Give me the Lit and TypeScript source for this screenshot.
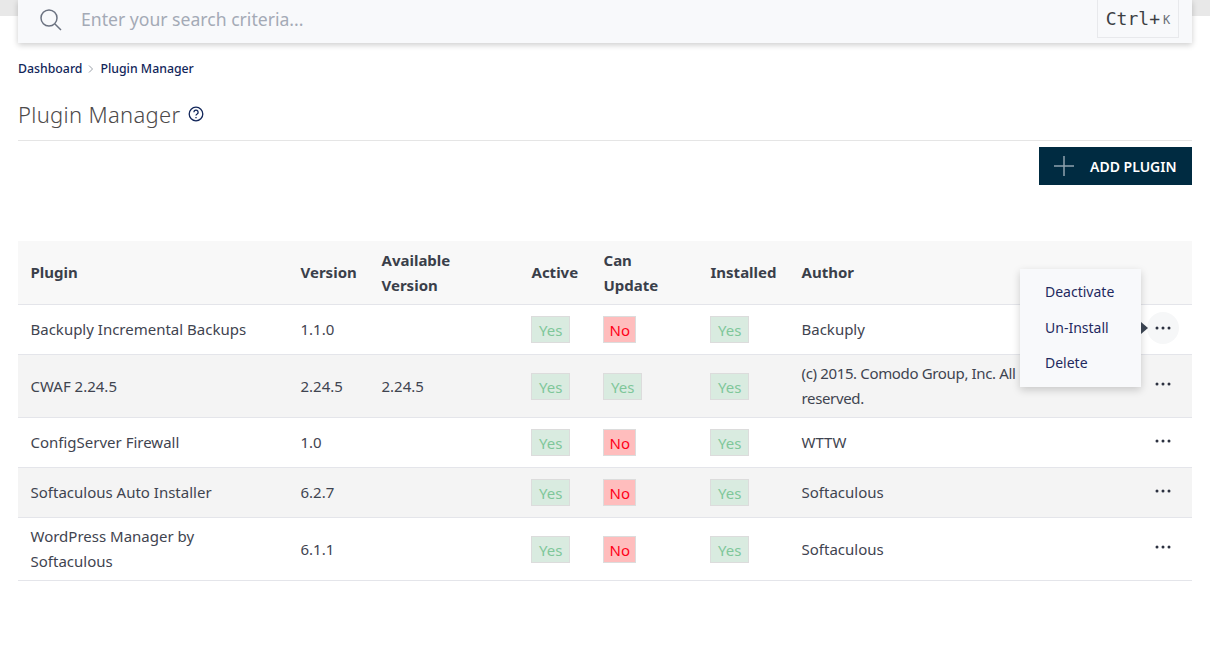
import { LitElement, html, css, svg } from "lit";
import { customElement } from "lit/decorators.js";

type Row = {
  name: string;
  version: string;
  available: string;
  active: boolean;
  canUpdate: boolean;
  installed: boolean;
  author: string;
};

const rows: Row[] = [
  { name: "Backuply Incremental Backups", version: "1.1.0", available: "", active: true, canUpdate: false, installed: true, author: "Backuply" },
  { name: "CWAF 2.24.5", version: "2.24.5", available: "2.24.5", active: true, canUpdate: true, installed: true, author: "(c) 2015. Comodo Group, Inc. All rights reserved." },
  { name: "ConfigServer Firewall", version: "1.0", available: "", active: true, canUpdate: false, installed: true, author: "WTTW" },
  { name: "Softaculous Auto Installer", version: "6.2.7", available: "", active: true, canUpdate: false, installed: true, author: "Softaculous" },
  { name: "WordPress Manager by Softaculous", version: "6.1.1", available: "", active: true, canUpdate: false, installed: true, author: "Softaculous" },
];

const dots = svg`<circle cx="3" cy="3" r="1.5"></circle><circle cx="9" cy="3" r="1.5"></circle><circle cx="15" cy="3" r="1.5"></circle>`;

@customElement("app-root")
export class AppRoot extends LitElement {
  static styles = css`
    :host {
      display: block;
      font-family: "Noto Sans", "Open Sans", sans-serif;
      color: #3f4450;
    }
    .page {
      position: relative;
      height: 664px;
      padding: 0 18px;
      box-sizing: border-box;
      overflow: hidden;
      background: linear-gradient(#e8e8e8 16px, #ffffff 16px);
    }

    /* search */
    .search {
      height: 43px;
      display: flex;
      align-items: flex-start;
      background: #f8f9fb;
      box-shadow: 0 2px 6px rgba(0, 0, 0, 0.2);
      padding: 0 13px 0 21px;
    }
    .search svg {
      width: 24px;
      height: 24px;
      margin-top: 8px;
      flex: none;
    }
    .search .hint {
      flex: 1;
      margin-left: 18px;
      font-size: 17.6px;
      line-height: 39px;
      color: #a4aab6;
    }
    .kbd {
      width: 82px;
      height: 38px;
      box-sizing: border-box;
      border: 1px solid #e8e9ec;
      border-top: none;
      display: flex;
      align-items: center;
      justify-content: center;
      font-family: "DejaVu Sans Mono", monospace;
      font-size: 18px;
      color: #3c3f44;
    }
    .kbd small {
      font-size: 12px;
      margin-left: 3px;
      margin-top: 3px;
      color: #6b7078;
    }

    /* heading */
    .crumbs {
      display: flex;
      align-items: center;
      gap: 5px;
      margin-top: 17px;
      height: 17px;
      font-size: 12.3px;
      font-weight: 500;
      color: #12265a;
    }
    .crumbs svg {
      width: 8px;
      height: 8px;
    }
    .title {
      display: flex;
      align-items: center;
      gap: 8px;
      height: 36px;
      margin-top: 19px;
      font-size: 22px;
      font-weight: 300;
      color: #4d4a4a;
      letter-spacing: 0.3px;
    }
    .title svg {
      width: 16px;
      height: 16px;
    }
    .rule {
      border-top: 1px solid #e5e5e5;
      margin-top: 8px;
    }
    .actions {
      display: flex;
      justify-content: flex-end;
      margin-top: 6px;
    }
    .add {
      width: 153px;
      height: 38px;
      display: flex;
      align-items: center;
      gap: 16px;
      padding-left: 15px;
      box-sizing: border-box;
      background: #002b41;
      color: #ffffff;
      font-size: 14px;
      font-weight: 600;
    }
    .add svg {
      width: 20px;
      height: 20px;
    }

    /* table */
    table {
      width: 100%;
      margin-top: 56px;
      border-collapse: collapse;
      table-layout: fixed;
      font-size: 15px;
      line-height: 25px;
    }
    th {
      background: #f8f8f8;
      height: 63px;
      padding: 0 12.5px;
      text-align: left;
      font-weight: 700;
      border-bottom: 1px solid #e4e5ea;
      color: #3a3f4a;
    }
    td {
      padding: 6px 12.5px;
      border-bottom: 1px solid #e4e5ea;
      height: 37px;
    }
    tbody tr:nth-child(even) td {
      background: #f4f4f4;
    }
    td.long {
      letter-spacing: -0.35px;
      padding-right: 50px;
    }
    .badge {
      display: inline-block;
      height: 27px;
      line-height: 27px;
      padding: 0 7px;
      margin-left: -0.5px;
      box-sizing: border-box;
      border: 1px solid #dcdcdc;
      font-size: 15px;
      vertical-align: middle;
    }
    .yes {
      background: #d9ebe0;
      color: #7fc79a;
    }
    .no {
      padding: 0 5.5px;
      background: #ffbdbd;
      color: #ff0019;
    }
    .more {
      width: 32px;
      height: 32px;
      margin-left: auto;
      display: flex;
      align-items: center;
      justify-content: center;
      border-radius: 50%;
    }
    .more.open {
      background: #f6f7f8;
    }
    .more svg {
      width: 18px;
      height: 6px;
      fill: #2c3140;
    }
    td.end {
      padding: 0 13px 4px 0;
    }

    /* row menu */
    .menu {
      position: absolute;
      left: 1020px;
      top: 269px;
      width: 121px;
      height: 118px;
      box-sizing: border-box;
      padding: 5px 0 0 25px;
      background: #f8f9fb;
      box-shadow: 0 3px 8px rgba(0, 0, 0, 0.18);
      font-size: 14px;
      color: #1f2a60;
    }
    .menu div {
      height: 35.5px;
      line-height: 35px;
    }
    .menu::after {
      content: "";
      position: absolute;
      left: 121px;
      top: 53px;
      border-left: 7px solid #3a4350;
      border-top: 6px solid transparent;
      border-bottom: 6px solid transparent;
    }
  `;

  private badge(on: boolean) {
    return html`<span class="badge ${on ? "yes" : "no"}">${on ? "Yes" : "No"}</span>`;
  }

  render() {
    return html`
      <div class="page">
        <div class="search">
          <svg viewBox="0 0 24 24" fill="none" stroke="#6b7280" stroke-width="1.5">
            <circle cx="10" cy="10" r="8"></circle>
            <path d="M16 16l6 6"></path>
          </svg>
          <div class="hint">Enter your search criteria...</div>
          <div class="kbd">Ctrl+<small>K</small></div>
        </div>

        <div class="crumbs">
          <span>Dashboard</span>
          <svg viewBox="0 0 8 8" fill="none" stroke="#9aa0a8"><path d="M2 0.5l3.5 3.5-3.5 3.5"></path></svg>
          <span>Plugin Manager</span>
        </div>

        <div class="title">
          Plugin Manager
          <svg viewBox="0 0 16 16" fill="none" stroke="#12265a" stroke-width="1.3">
            <circle cx="8" cy="8" r="6.8"></circle>
            <path d="M5.9 6.2a2.1 2.1 0 1 1 3.2 1.8c-.7.4-1.1.8-1.1 1.6"></path>
            <path d="M8 11v1.2"></path>
          </svg>
        </div>
        <div class="rule"></div>

        <div class="actions">
          <div class="add">
            <svg viewBox="0 0 20 20" stroke="#8fa3ae" stroke-width="1.5"><path d="M10 0v20M0 10h20"></path></svg>
            ADD PLUGIN
          </div>
        </div>

        <table>
          <colgroup>
            <col style="width:270px" />
            <col style="width:81px" />
            <col style="width:150px" />
            <col style="width:72px" />
            <col style="width:107px" />
            <col style="width:91px" />
            <col />
            <col style="width:52px" />
          </colgroup>
          <thead>
            <tr>
              <th>Plugin</th>
              <th>Version</th>
              <th>Available Version</th>
              <th>Active</th>
              <th>Can<br />Update</th>
              <th>Installed</th>
              <th>Author</th>
              <th></th>
            </tr>
          </thead>
          <tbody>
            ${rows.map(
              (r, i) => html`
                <tr>
                  <td>${r.name}</td>
                  <td>${r.version}</td>
                  <td>${r.available}</td>
                  <td>${this.badge(r.active)}</td>
                  <td>${this.badge(r.canUpdate)}</td>
                  <td>${this.badge(r.installed)}</td>
                  <td class="${r.author.length > 20 ? "long" : ""}">${r.author}</td>
                  <td class="end">
                    <div class="more ${i === 0 ? "open" : ""}">
                      <svg viewBox="0 0 18 6">${dots}</svg>
                    </div>
                  </td>
                </tr>
              `
            )}
          </tbody>
        </table>

        <div class="menu">
          <div>Deactivate</div>
          <div>Un-Install</div>
          <div>Delete</div>
        </div>
      </div>
    `;
  }
}
